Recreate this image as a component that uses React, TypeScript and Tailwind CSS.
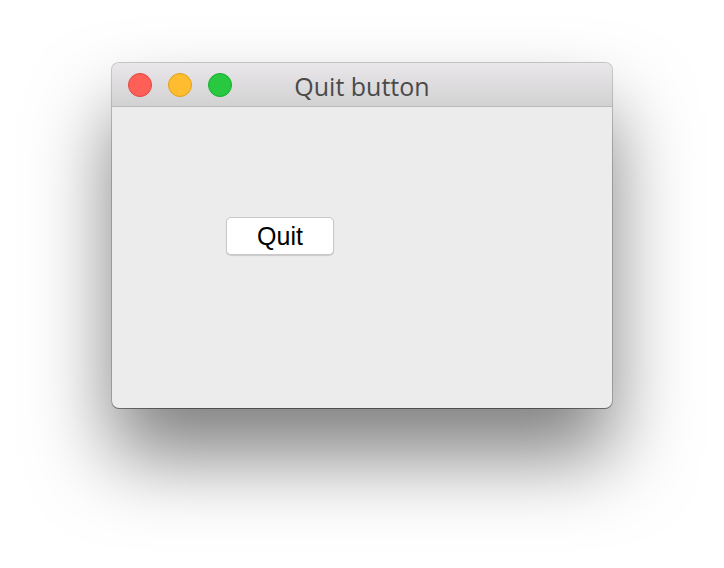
export default function App() {
  return (
    <div className="w-[724px] h-[568px] bg-white flex justify-center pt-[63px]">
      <div className="w-[500px] h-[345px] rounded-[7px] bg-[#ececec] flex flex-col overflow-hidden shadow-[0_48px_80px_rgba(0,0,0,0.5),0_0_0_1px_rgba(0,0,0,0.2),0_1px_0_rgba(0,0,0,0.3)]">
        <div className="relative h-[44px] shrink-0 flex items-center px-[16px] gap-[16px] border-b border-[#b9b9b9] bg-gradient-to-b from-[#e9e7e9] to-[#d3d2d3]">
          <div className="w-[24px] h-[24px] rounded-full bg-[#fe5f57] border border-[#e2463f]" />
          <div className="w-[24px] h-[24px] rounded-full bg-[#febc2e] border border-[#e1a116]" />
          <div className="w-[24px] h-[24px] rounded-full bg-[#28c840] border border-[#14ae2c]" />
          <div className="absolute inset-0 flex items-center justify-center pt-[3px] pointer-events-none">
            <span className="text-[25px] text-[#4a4a4a] font-['Open_Sans',sans-serif] leading-none">Quit button</span>
          </div>
        </div>
        <div className="flex-1 pl-[114px] pt-[110px]">
          <button className="w-[108px] h-[38px] bg-white rounded-[5px] border border-[#c8c8c8] shadow-[0_1px_1px_rgba(0,0,0,0.15)] text-[25px] text-black font-['Liberation_Sans',sans-serif] leading-none flex items-center justify-center">
            Quit
          </button>
        </div>
      </div>
    </div>
  );
}
